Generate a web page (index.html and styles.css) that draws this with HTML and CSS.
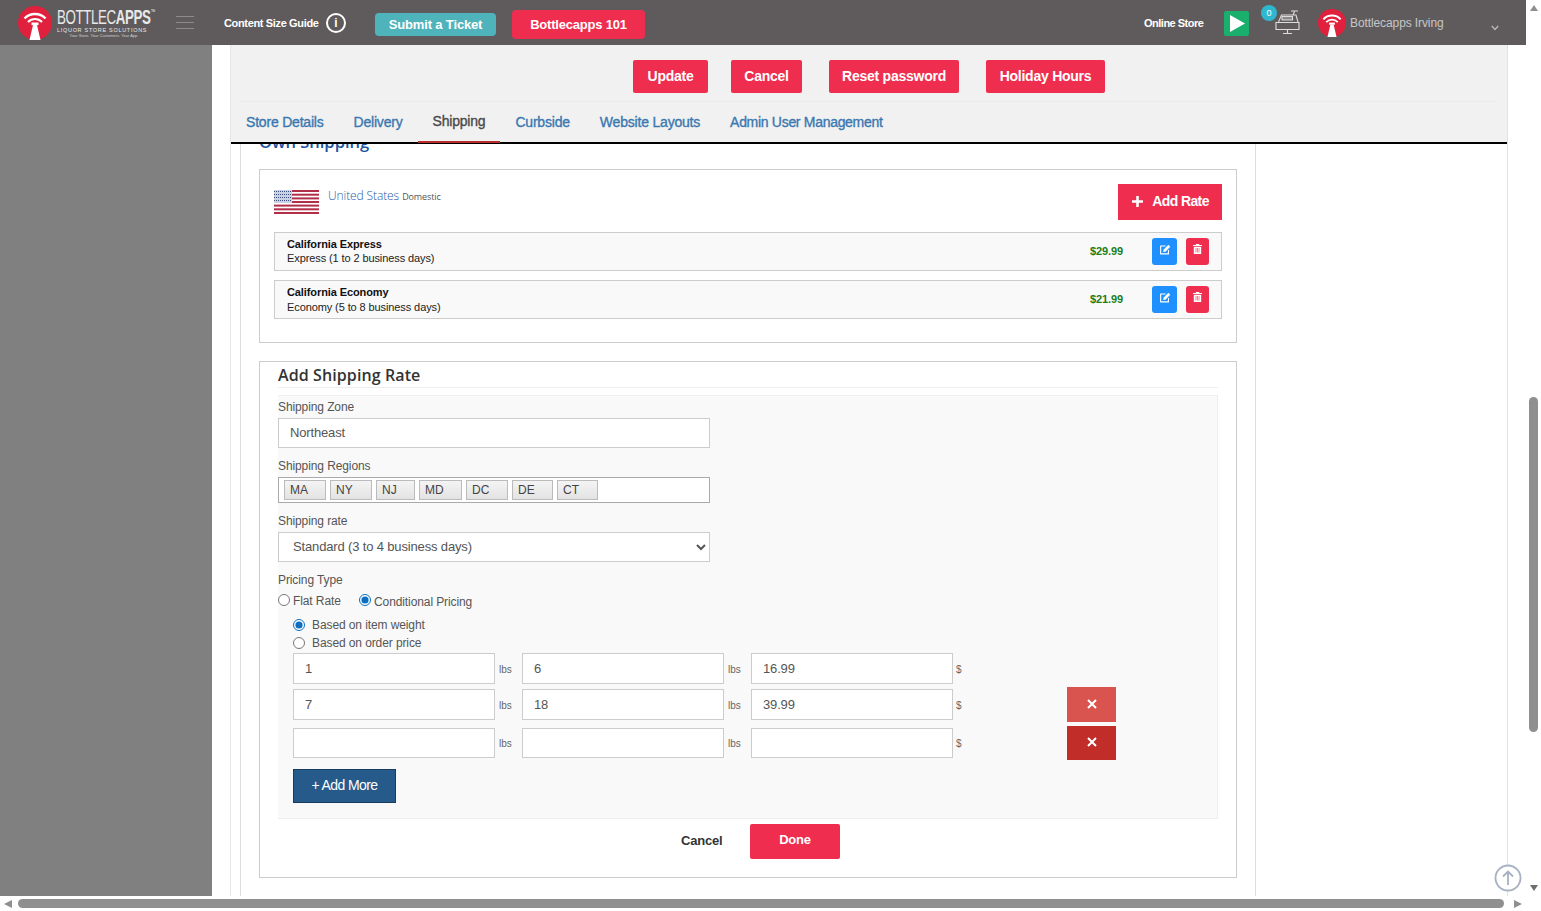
FILE: index.html
```html
<!DOCTYPE html>
<html lang="en">
<head>
<meta charset="utf-8">
<title>Shipping</title>
<link rel="stylesheet" href="styles.css">
</head>
<body>
<svg class="defs" width="0" height="0" aria-hidden="true">
  <symbol id="bc-mark" viewBox="0 0 34 34">
    <circle cx="17" cy="17" r="17" fill="#e0203c"/>
    <path d="M6.500 12.500 C12 6.500 22 6.500 27.500 12.500" fill="none" stroke="#fff" stroke-width="2.400"/>
    <path d="M10 16 C14 12 20 12 24 16" fill="none" stroke="#fff" stroke-width="2.200"/>
    <rect x="13.500" y="16.500" width="7" height="2.600" fill="#fff"/>
    <path d="M15 19 h4 l3.500 15 h-11z" fill="#fff"/>
  </symbol>
</svg>
<div class="window">
  <div class="page">
    <header class="topbar">
      <div class="logo">
        <svg class="logo-mark"><use href="#bc-mark"/></svg>
        <div class="logo-text">
          <div class="logo-name">BOTTLEC<b>APPS</b><sup>™</sup></div>
          <div class="logo-sub">LIQUOR STORE SOLUTIONS</div>
          <div class="logo-tag">Your Store. Your Customers. Your App.</div>
        </div>
      </div>
      <div class="burger"><i></i><i></i><i></i></div>
      <span class="guide">Content Size Guide</span>
      <span class="info">i</span>
      <a class="ticket">Submit a Ticket</a>
      <a class="b101">Bottlecapps 101</a>
      <span class="online">Online Store</span>
      <span class="play"><svg width="25" height="25" viewBox="0 0 25 25"><path d="M6 4 L21 12.500 L6 21z" fill="#fff"/></svg></span>
      <span class="register">
        <span class="badge">0</span>
        <svg width="25" height="27" viewBox="0 0 25 27" fill="none" stroke="#dcdcdc" stroke-width="1.100"><path d="M3.500 13 L6.500 6 H21 L23 13"/><path d="M7 7.500 H17.500 V11 H7z" fill="#dcdcdc" fill-opacity=".35"/><path d="M18 6 L19.500 2.500 M16 2 H23"/><path d="M1 13.500 H24 V20.500 H1z"/><path d="M8 24.500 H17 M12.500 20.500 V24.500"/></svg>
      </span>
      <svg class="avatar"><use href="#bc-mark"/></svg>
      <span class="username">Bottlecapps Irving</span>
      <svg class="chev" width="8" height="6" viewBox="0 0 8 6" fill="none" stroke="#b9b9b9" stroke-width="1.400"><path d="M.8 1 L4 4.400 L7.200 1"/></svg>
    </header>
    <div class="below">
      <aside class="sidebar"></aside>
      <main class="main">
        <div class="panel">
          <div class="panel-head">
            <div class="actions">
              <a class="btn w-update">Update</a>
              <a class="btn w-cancel">Cancel</a>
              <a class="btn w-reset">Reset password</a>
              <a class="btn w-holiday">Holiday Hours</a>
            </div>
            <nav class="tabs">
              <a class="tab">Store Details</a>
              <a class="tab">Delivery</a>
              <a class="tab active">Shipping</a>
              <a class="tab">Curbside</a>
              <a class="tab">Website Layouts</a>
              <a class="tab">Admin User Management</a>
            </nav>
          </div>
          <div class="scroll">
            <div class="box">
              <h2 class="own">Own Shipping</h2>
              <section class="card card-zone">
                <div class="zone-head">
                  <svg class="flag" width="45" height="24" viewBox="0 0 45 24">
                    <rect width="45" height="24" fill="#fff"/>
                    <g fill="#b22f4a"><rect width="45" height="2"/><rect y="3.700" width="45" height="2"/><rect y="7.400" width="45" height="2"/><rect y="11" width="45" height="2"/><rect y="14.600" width="45" height="2"/><rect y="18.300" width="45" height="2"/><rect y="22" width="45" height="2"/></g>
                    <rect width="18" height="13" fill="#c9d2e2"/>
                    <path d="M0 1.500H18M0 4.500H18M0 7.500H18M0 10.500H18" stroke="#3d4f7f" stroke-width="1" stroke-dasharray="1 1"/>
                  </svg>
                  <div class="zone-name">United States <small>Domestic</small></div>
                  <a class="add-rate"><svg width="11" height="11" viewBox="0 0 11 11"><path d="M4.200 0h2.600v4.200H11v2.600H6.800V11H4.200V6.800H0V4.200h4.200z" fill="#fff"/></svg>Add Rate</a>
                </div>
                <div class="rate rate-1">
                  <div class="rate-text"><b>California Express</b><span>Express (1 to 2 business days)</span></div>
                  <span class="price">$29.99</span>
                  <a class="icon-btn edit"><svg width="12" height="11" viewBox="0 0 12 11"><path d="M1.500 1.500H7L6 2.600H2.200V9.300H8.900V6.500L10 5.400V10.400H1.100V1.500z" fill="#fff"/><path d="M4.500 5.800 L9.400 .8 L11.300 2.700 L6.400 7.700 L4.300 8z" fill="#fff"/></svg></a>
                  <a class="icon-btn del"><svg width="9" height="10" viewBox="0 0 9 10"><path d="M3 0H6L6.500 1H9V2H0V1H2.500z M.8 2.800H8.200V10H.8z" fill="#fff"/><path d="M3 4V8.500M4.500 4V8.500M6 4V8.500" stroke="#ef2d4e" stroke-width=".6"/></svg></a>
                </div>
                <div class="rate rate-2">
                  <div class="rate-text"><b>California Economy</b><span>Economy (5 to 8 business days)</span></div>
                  <span class="price">$21.99</span>
                  <a class="icon-btn edit"><svg width="12" height="11" viewBox="0 0 12 11"><path d="M1.500 1.500H7L6 2.600H2.200V9.300H8.900V6.500L10 5.400V10.400H1.100V1.500z" fill="#fff"/><path d="M4.500 5.800 L9.400 .8 L11.300 2.700 L6.400 7.700 L4.300 8z" fill="#fff"/></svg></a>
                  <a class="icon-btn del"><svg width="9" height="10" viewBox="0 0 9 10"><path d="M3 0H6L6.500 1H9V2H0V1H2.500z M.8 2.800H8.200V10H.8z" fill="#fff"/><path d="M3 4V8.500M4.500 4V8.500M6 4V8.500" stroke="#ef2d4e" stroke-width=".6"/></svg></a>
                </div>
              </section>
              <section class="card card-form">
                <h3 class="form-title">Add Shipping Rate</h3>
                <div class="form-body">
                  <label class="lbl lbl-first">Shipping Zone</label>
                  <input class="ctl ctl-wide" type="text" value="Northeast">
                  <label class="lbl">Shipping Regions</label>
                  <div class="tags">
                    <span class="tag w42">MA</span><span class="tag w42">NY</span><span class="tag w39">NJ</span><span class="tag w43">MD</span><span class="tag w42">DC</span><span class="tag w41">DE</span><span class="tag w41">CT</span>
                  </div>
                  <label class="lbl">Shipping rate</label>
                  <select class="ctl ctl-wide ctl-select"><option>Standard (3 to 4 business days)</option></select>
                  <label class="lbl">Pricing Type</label>
                  <div class="pricing">
                    <label class="opt opt-flat"><input type="radio" name="ptype">Flat Rate</label>
                    <label class="opt opt-cond"><input type="radio" name="ptype" checked>Conditional Pricing</label>
                  </div>
                  <div class="cond">
                    <label class="opt2 opt2-first"><input type="radio" name="basis" checked>Based on item weight</label>
                    <label class="opt2"><input type="radio" name="basis">Based on order price</label>
                    <div class="range r1">
                      <input class="ctl num" type="text" value="1"><span class="unit">lbs</span>
                      <input class="ctl num" type="text" value="6"><span class="unit">lbs</span>
                      <input class="ctl num" type="text" value="16.99"><span class="unit unit-d">$</span>
                    </div>
                    <div class="range r2">
                      <input class="ctl num" type="text" value="7"><span class="unit">lbs</span>
                      <input class="ctl num" type="text" value="18"><span class="unit">lbs</span>
                      <input class="ctl num" type="text" value="39.99"><span class="unit unit-d">$</span>
                      <a class="x x-light"><svg width="10" height="10" viewBox="0 0 10 10"><path d="M1 1L9 9M9 1L1 9" stroke="#fff" stroke-width="2"/></svg></a>
                    </div>
                    <div class="range r3">
                      <input class="ctl num" type="text"><span class="unit">lbs</span>
                      <input class="ctl num" type="text"><span class="unit">lbs</span>
                      <input class="ctl num" type="text"><span class="unit unit-d">$</span>
                      <a class="x x-dark"><svg width="10" height="10" viewBox="0 0 10 10"><path d="M1 1L9 9M9 1L1 9" stroke="#fff" stroke-width="2"/></svg></a>
                    </div>
                    <a class="add-more">+ Add More</a>
                  </div>
                </div>
                <div class="form-foot">
                  <a class="foot-cancel">Cancel</a>
                  <a class="foot-done">Done</a>
                </div>
              </section>
            </div>
          </div>
        </div>
      </main>
      <a class="to-top"><svg width="28" height="28" viewBox="0 0 28 28" fill="#fff" stroke="#a6b1c2" stroke-width="1.800"><circle cx="14" cy="14" r="12.500"/><path d="M14 21V8M9 12.500L14 7.500L19 12.500" fill="none"/></svg></a>
    </div>
    <div class="hbar">
      <span class="arrow a-left"></span>
      <span class="hthumb"></span>
      <span class="arrow a-right"></span>
    </div>
  </div>
  <div class="vbar">
    <span class="arrow a-up"></span>
    <span class="vthumb"></span>
    <span class="arrow a-down"></span>
  </div>
</div>
</body>
</html>
```
FILE: styles.css
```css
* { box-sizing: border-box; }
html, body { margin: 0; height: 100%; overflow: hidden; }
body { font-family: "Liberation Sans", Arial, sans-serif; font-size: 12px; color: #555; background: #fff; }
a { display: block; }
.defs { position: absolute; }

.window { display: flex; width: 1541px; height: 911px; }
.page { width: 1526px; display: flex; flex-direction: column; }

/* top bar */
.topbar { height: 45px; background: #5f5b5c; display: flex; align-items: center; color: #fff; flex: none; }
.logo { display: flex; align-items: center; margin-left: 18px; width: 134px; }
.logo-mark { width: 34px; height: 34px; flex: none; }
.logo-text { margin-left: 5px; width: 100px; color: #e8e8e8; }
.logo-name { font-size: 21px; line-height: 20px; letter-spacing: -.6px; transform: scaleX(.635); transform-origin: left; white-space: nowrap; }
.logo-name b { font-weight: 700; }
.logo-name sup { font-size: 7px; letter-spacing: 0; line-height: 0; vertical-align: 10px; }
.logo-sub { font-size: 5.500px; line-height: 6px; letter-spacing: .7px; white-space: nowrap; }
.logo-tag { font-size: 4px; line-height: 6px; text-align: center; width: 94px; white-space: nowrap; color: #cfcfcf; }
.burger { margin-left: 24px; width: 18px; display: flex; flex-direction: column; gap: 5px; }
.burger i { display: block; height: 1px; background: #8e8a8b; }
.guide { margin-left: 30px; font-size: 11px; font-weight: 700; letter-spacing: -.35px; white-space: nowrap; width: 94px; }
.info { margin-left: 8px; width: 20px; height: 20px; border: 2px solid #fff; border-radius: 50%; font-size: 12px; font-weight: 700; line-height: 16px; text-align: center; }
.ticket { margin: 4px 0 0 29px; width: 121px; height: 23px; border-radius: 4px; background: #4fb3bb; font-size: 13px; font-weight: 700; letter-spacing: -.15px; line-height: 23px; text-align: center; }
.b101 { margin: 4px 0 0 16px; width: 133px; height: 29px; border-radius: 4px; background: #ef2d4e; font-size: 13px; font-weight: 700; letter-spacing: -.2px; line-height: 29px; text-align: center; }
.online { margin-left: 499px; width: 60px; font-size: 11px; font-weight: 700; letter-spacing: -.5px; white-space: nowrap; }
.play { margin: 2px 0 0 20px; width: 25px; height: 25px; border-radius: 2px; background: #1aaf6c; }
.play svg { display: block; }
.register { position: relative; margin-left: 26px; width: 25px; height: 27px; margin-top: -1px; }
.register svg { display: block; }
.badge { position: absolute; left: -14px; top: -4px; width: 16px; height: 16px; border-radius: 50%; background: #2eb7cf; font-size: 9px; line-height: 16px; text-align: center; }
.avatar { margin: 1px 0 0 18px; width: 28px; height: 28px; flex: none; }
.username { margin-left: 4px; width: 94px; font-size: 12px; color: #c6c6c6; white-space: nowrap; letter-spacing: -.1px; }
.chev { margin: 10px 0 0 47px; }

/* page body */
.below { position: relative; flex: 1; display: flex; min-height: 0; }
.sidebar { width: 212px; background: #808080; flex: none; }
.main { flex: 1; padding: 0 18px; min-width: 0; }
.panel { height: 100%; display: flex; flex-direction: column; border-left: 1px solid #e6e6e6; border-right: 1px solid #dfe3e8; }
.panel-head { background: #f1f1f1; height: 99px; border-bottom: 2px solid #000; flex: none; }
.actions { height: 57px; padding-top: 15px; border-bottom: 1px solid #eaeaea; margin: 0 10px; display: flex; justify-content: center; gap: 27px; }
.btn { height: 33px; background: #ef2d4e; color: #fff; border-radius: 2px; font-size: 14px; font-weight: 700; letter-spacing: -.25px; line-height: 32px; text-align: center; white-space: nowrap; }
.w-update { width: 75px; margin-right: -4px; }
.w-cancel { width: 71px; }
.w-reset { width: 130px; }
.w-holiday { width: 119px; }
.tabs { display: flex; height: 40px; }
.tab { padding: 0 15px; line-height: 40px; font-size: 14px; -webkit-text-stroke: .35px; color: #3a78b0; white-space: nowrap; letter-spacing: -.2px; }
.tab:last-child { letter-spacing: -.3px; }
.tab.active { color: #4a4a4a; height: 41px; border-bottom: 2px solid #b92c2c; line-height: 38px; }

.scroll { flex: 1; overflow: hidden; padding-left: 9px; min-height: 0; }
.box { display: flow-root; width: 1016px; height: 100%; padding: 0 18px; border-left: 1px solid #ddd; border-right: 1px solid #ddd; }
.own { margin: -14px 0 15px; height: 24px; font: 600 16.500px/24px "Open Sans", sans-serif; color: #1a55a0; }
.card { border: 1px solid #ccc; }

/* zone card */
.card-zone { height: 174px; padding: 14px 14px 0; margin-bottom: 18px; }
.zone-head { display: flex; height: 36px; }
.flag { margin-top: 6px; flex: none; }
.zone-name { margin: 4px 0 0 9px; font: 300 12px/16px "Open Sans", sans-serif; letter-spacing: -.1px; color: #1f5aa8; flex: 1; }
.zone-name small { font-size: 9px; font-weight: 400; color: #555; }
.add-rate { width: 104px; height: 36px; padding: 0 0 2px 1px; background: #ef2d4e; color: #fff; font-size: 14px; font-weight: 700; letter-spacing: -.6px; display: flex; align-items: center; justify-content: center; gap: 9px; }
.rate { margin-top: 12px; height: 39px; border: 1px solid #ccc; background: #f9f9f9; display: flex; align-items: center; padding: 0 12px; }
.rate-2 { margin-top: 9px; }
.rate-text { flex: 1; display: flex; flex-direction: column; font-size: 11px; line-height: 14.500px; letter-spacing: -.1px; color: #222; }
.rate-text b { color: #111; }
.rate-1 .rate-text { margin-top: -1px; }
.price { margin: 0 29px 2px 0; font-size: 11px; font-weight: 700; letter-spacing: -.1px; color: #1a7f1a; }
.icon-btn { height: 27px; border-radius: 3px; display: flex; justify-content: center; padding-top: 6px; }
.edit { width: 25px; background: #1e90ff; margin-right: 9px; }
.del { width: 23px; background: #ef2d4e; }

/* form card */
.card-form { height: 517px; padding: 0 18px; }
.form-title { margin: 0; height: 26px; font: 600 16px/26px "Open Sans", sans-serif; letter-spacing: .1px; color: #333; border-bottom: 1px solid #eee; }
.form-body { margin-top: 7px; background: #f9f9f9; border: 1px solid #eee; border-left-width: 0; padding-bottom: 15px; letter-spacing: -.1px; }
.lbl { display: block; margin-top: 7px; height: 22px; line-height: 22px; color: #555; }
.lbl-first { margin-top: 0; }
.ctl { height: 30px; border: 1px solid #ccc; background: #fff; font: 13px "Liberation Sans", sans-serif; letter-spacing: -.15px; color: #555; padding: 0 11px; border-radius: 0; outline: 0; display: block; }
.ctl-wide { width: 432px; padding-bottom: 2px; }
.ctl-select { padding: 0 10px 2px; }
.tags { width: 432px; height: 26px; border: 1px solid #aaa; background: #fff; display: flex; align-items: center; gap: 4px; padding-left: 5px; letter-spacing: 0; }
.tag { height: 20px; padding-left: 5px; line-height: 18px; border: 1px solid #bbb; background: linear-gradient(#f4f4f4, #e3e3e3); color: #444; }
.w39 { width: 39px; } .w41 { width: 41px; } .w42 { width: 42px; } .w43 { width: 43px; }
.pricing { display: flex; height: 20px; align-items: center; }
.opt { display: flex; align-items: center; }
.opt input, .opt2 input { width: 12px; height: 12px; margin: 0 3px 0 0; accent-color: #0a6fc2; flex: none; }
.opt-flat { width: 81px; }
.opt-flat input { margin-top: -3px; }
.opt-cond input { margin-top: -3px; }
.opt-cond { margin-top: 1px; }
.cond { padding: 5px 0 0 15px; }
.opt2 { display: flex; align-items: center; height: 18px; }
.opt2 input { margin-right: 7px; }
.range { display: flex; align-items: center; }
.r1 { margin-top: 1px; height: 31px; }
.r2 { margin-top: 5px; height: 31px; }
.r3 { margin-top: 8px; height: 30px; }
.num { width: 202px; height: 100%; }
.unit { width: 27px; padding-left: 4px; font-size: 10px; letter-spacing: 0; color: #666; margin-top: 2px; }
.r3 .unit { margin-top: 1px; }
.unit-d { width: 114px; padding-left: 3px; }
.x { width: 49px; height: 35px; margin: -2px 0; padding-bottom: 2px; display: flex; align-items: center; justify-content: center; flex: none; }
.x-light { background: #d9534f; }
.x-dark { height: 34px; background: #c12e2a; }
.add-more { margin-top: 11px; width: 103px; height: 34px; background: #255a8a; border: 1px solid #183c5c; color: #fff; font-size: 14px; letter-spacing: -.6px; text-align: center; line-height: 30px; }
.form-foot { display: flex; margin-top: 5px; padding-left: 403px; align-items: center; gap: 28px; }
.foot-cancel { width: 41px; margin-top: -2px; font-size: 13px; font-weight: 700; color: #333; letter-spacing: -.2px; white-space: nowrap; }
.foot-done { width: 90px; height: 35px; border-radius: 2px; background: #ef2d4e; color: #fff; font-size: 13px; font-weight: 700; letter-spacing: -.2px; line-height: 32px; text-align: center; }

/* scrollbars */
.to-top { position: absolute; left: 1494px; bottom: 4px; width: 28px; height: 28px; }
.to-top svg { display: block; }
.hbar { height: 15px; flex: none; display: flex; align-items: center; background: #fff; padding: 0 4px; }
.hthumb { margin: 0 10px 0 6px; width: 1486px; height: 9px; border-radius: 5px; background: #8f8f8f; }
.vbar { width: 15px; display: flex; flex-direction: column; align-items: center; background: #fff; padding-top: 5px; }
.vthumb { margin-top: 386px; width: 9px; height: 335px; border-radius: 5px; background: #8f8f8f; }
.arrow { width: 0; height: 0; display: block; border-style: solid; border-color: transparent; flex: none; }
.a-up { border-width: 0 4.500px 6px; border-bottom-color: #8f8f8f; }
.a-down { margin-top: 153px; border-width: 6px 4.500px 0; border-top-color: #6f6f6f; }
.a-left { border-width: 4.500px 8px 4.500px 0; border-right-color: #8f8f8f; }
.a-right { border-width: 4.500px 0 4.500px 8px; border-left-color: #8f8f8f; }
```
